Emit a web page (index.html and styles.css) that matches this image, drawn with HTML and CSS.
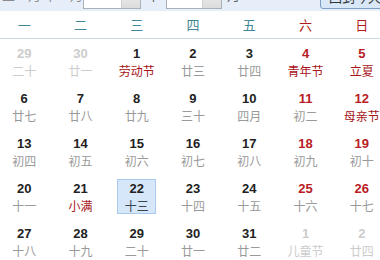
FILE: index.html
```html
<!DOCTYPE html>
<html lang="zh-CN">
<head>
<meta charset="utf-8">
<title>万年历</title>
<link rel="stylesheet" href="styles.css">
</head>
<body>
<div class="calendar">
  <div class="toolbar">
    <span class="tb-text tb-lead">上一月 下一月</span>
    <span class="select year"><span class="sel-val">2013</span><span class="sel-btn"></span></span>
    <span class="tb-text">年</span>
    <span class="select month"><span class="sel-val">5</span><span class="sel-btn"></span></span>
    <span class="tb-text">月</span>
    <span class="today-btn">回到今天</span>
  </div>

  <div class="weekdays">
    <div class="wd">一</div>
    <div class="wd">二</div>
    <div class="wd">三</div>
    <div class="wd">四</div>
    <div class="wd">五</div>
    <div class="wd weekend">六</div>
    <div class="wd weekend">日</div>
  </div>

  <div class="days">
    <div class="day other"><div class="in"><span class="num">29</span><span class="lunar">二十</span></div></div>
    <div class="day other"><div class="in"><span class="num">30</span><span class="lunar">廿一</span></div></div>
    <div class="day"><div class="in"><span class="num">1</span><span class="lunar fest">劳动节</span></div></div>
    <div class="day"><div class="in"><span class="num">2</span><span class="lunar">廿三</span></div></div>
    <div class="day"><div class="in"><span class="num">3</span><span class="lunar">廿四</span></div></div>
    <div class="day weekend"><div class="in"><span class="num">4</span><span class="lunar fest">青年节</span></div></div>
    <div class="day weekend"><div class="in"><span class="num">5</span><span class="lunar fest">立夏</span></div></div>

    <div class="day"><div class="in"><span class="num">6</span><span class="lunar">廿七</span></div></div>
    <div class="day"><div class="in"><span class="num">7</span><span class="lunar">廿八</span></div></div>
    <div class="day"><div class="in"><span class="num">8</span><span class="lunar">廿九</span></div></div>
    <div class="day"><div class="in"><span class="num">9</span><span class="lunar">三十</span></div></div>
    <div class="day"><div class="in"><span class="num">10</span><span class="lunar">四月</span></div></div>
    <div class="day weekend"><div class="in"><span class="num">11</span><span class="lunar">初二</span></div></div>
    <div class="day weekend"><div class="in"><span class="num">12</span><span class="lunar fest">母亲节</span></div></div>

    <div class="day"><div class="in"><span class="num">13</span><span class="lunar">初四</span></div></div>
    <div class="day"><div class="in"><span class="num">14</span><span class="lunar">初五</span></div></div>
    <div class="day"><div class="in"><span class="num">15</span><span class="lunar">初六</span></div></div>
    <div class="day"><div class="in"><span class="num">16</span><span class="lunar">初七</span></div></div>
    <div class="day"><div class="in"><span class="num">17</span><span class="lunar">初八</span></div></div>
    <div class="day weekend"><div class="in"><span class="num">18</span><span class="lunar">初九</span></div></div>
    <div class="day weekend"><div class="in"><span class="num">19</span><span class="lunar">初十</span></div></div>

    <div class="day"><div class="in"><span class="num">20</span><span class="lunar">十一</span></div></div>
    <div class="day"><div class="in"><span class="num">21</span><span class="lunar fest">小满</span></div></div>
    <div class="day selected"><div class="in"><span class="num">22</span><span class="lunar">十三</span></div></div>
    <div class="day"><div class="in"><span class="num">23</span><span class="lunar">十四</span></div></div>
    <div class="day"><div class="in"><span class="num">24</span><span class="lunar">十五</span></div></div>
    <div class="day weekend"><div class="in"><span class="num">25</span><span class="lunar">十六</span></div></div>
    <div class="day weekend"><div class="in"><span class="num">26</span><span class="lunar">十七</span></div></div>

    <div class="day"><div class="in"><span class="num">27</span><span class="lunar">十八</span></div></div>
    <div class="day"><div class="in"><span class="num">28</span><span class="lunar">十九</span></div></div>
    <div class="day"><div class="in"><span class="num">29</span><span class="lunar">二十</span></div></div>
    <div class="day"><div class="in"><span class="num">30</span><span class="lunar">廿一</span></div></div>
    <div class="day"><div class="in"><span class="num">31</span><span class="lunar">廿二</span></div></div>
    <div class="day other"><div class="in"><span class="num">1</span><span class="lunar">儿童节</span></div></div>
    <div class="day other"><div class="in"><span class="num">2</span><span class="lunar">廿四</span></div></div>
  </div>
</div>
</body>
</html>
```

FILE: styles.css
```css
html, body {
  margin: 0;
  padding: 0;
  background: #ffffff;
  overflow: hidden;
}

body {
  font-family: "Liberation Sans", "Noto Sans CJK SC", sans-serif;
  color: #222222;
}

.calendar {
  width: 394px;
  margin-left: -4px;
}

/* top toolbar, mostly cut off by the viewport */
.toolbar {
  box-sizing: border-box;
  height: 34px;
  margin-top: -23px;
  padding-bottom: 2px;
  background: #e6eff9;
  display: flex;
  align-items: flex-end;
  font-size: 13px;
  color: #555555;
  white-space: nowrap;
}

.tb-text {
  line-height: 20px;
  padding-bottom: 4px;
  font-family: "Noto Sans CJK SC", sans-serif;
}

.tb-lead {
  width: 92px;
  padding-left: 6px;
  box-sizing: border-box;
  color: #8a8a8a;
}

.select {
  box-sizing: border-box;
  display: inline-flex;
  height: 24px;
  width: 63px;
  border: 1px solid #a9b0b8;
  background: #ffffff;
}

.select.month {
  margin-left: 7px;
  width: 60px;
}

.year + .tb-text {
  margin-left: 5px;
}

.month + .tb-text {
  margin-left: 5px;
}

.sel-val {
  flex: 1;
  font-size: 13px;
  line-height: 20px;
  padding-left: 5px;
  color: #222222;
}

.sel-btn {
  width: 18px;
  background: linear-gradient(#f4f4f4, #dcdcdc);
  border-left: 1px solid #cfcfcf;
}

.today-btn {
  box-sizing: border-box;
  margin-left: 80px;
  height: 24px;
  padding: 0 8px;
  border: 1px solid #7d9fc3;
  border-radius: 3px;
  background: #d9e8f8;
  font-family: "Noto Sans CJK SC", sans-serif;
  font-size: 13px;
  line-height: 22px;
  color: #333333;
}

/* weekday header */
.weekdays {
  display: grid;
  grid-template-columns: repeat(7, 1fr);
  height: 27px;
  border-bottom: 1px solid #c9d8e2;
  background: #ffffff;
}

.wd {
  text-align: center;
  font-family: "Noto Sans CJK SC", sans-serif;
  font-size: 13px;
  line-height: 27px;
  color: #3f8796;
}

.wd.weekend {
  color: #b01c1c;
}

/* day grid */
.days {
  display: grid;
  grid-template-columns: repeat(7, 1fr);
  grid-auto-rows: 45px;
}

.day {
  padding-top: 5px;
}

.in {
  box-sizing: border-box;
  width: 39px;
  height: 35px;
  margin: 0 auto;
  border: 1px solid transparent;
  text-align: center;
}

.num {
  display: block;
  font-size: 13px;
  font-weight: bold;
  line-height: 17px;
  color: #222222;
}

.lunar {
  display: block;
  font-family: "Noto Sans CJK SC", sans-serif;
  font-size: 12px;
  line-height: 17px;
  color: #9a9a9a;
  white-space: nowrap;
}

.lunar.fest {
  color: #a8141a;
}

.day.weekend .num {
  color: #b81c24;
}

.day.other .num,
.day.other .lunar {
  color: #cccccc;
}

.day.selected .in {
  background: #d7e7fa;
  border-color: #a9c9ee;
}

.day.selected .lunar {
  color: #3a4450;
}
```
